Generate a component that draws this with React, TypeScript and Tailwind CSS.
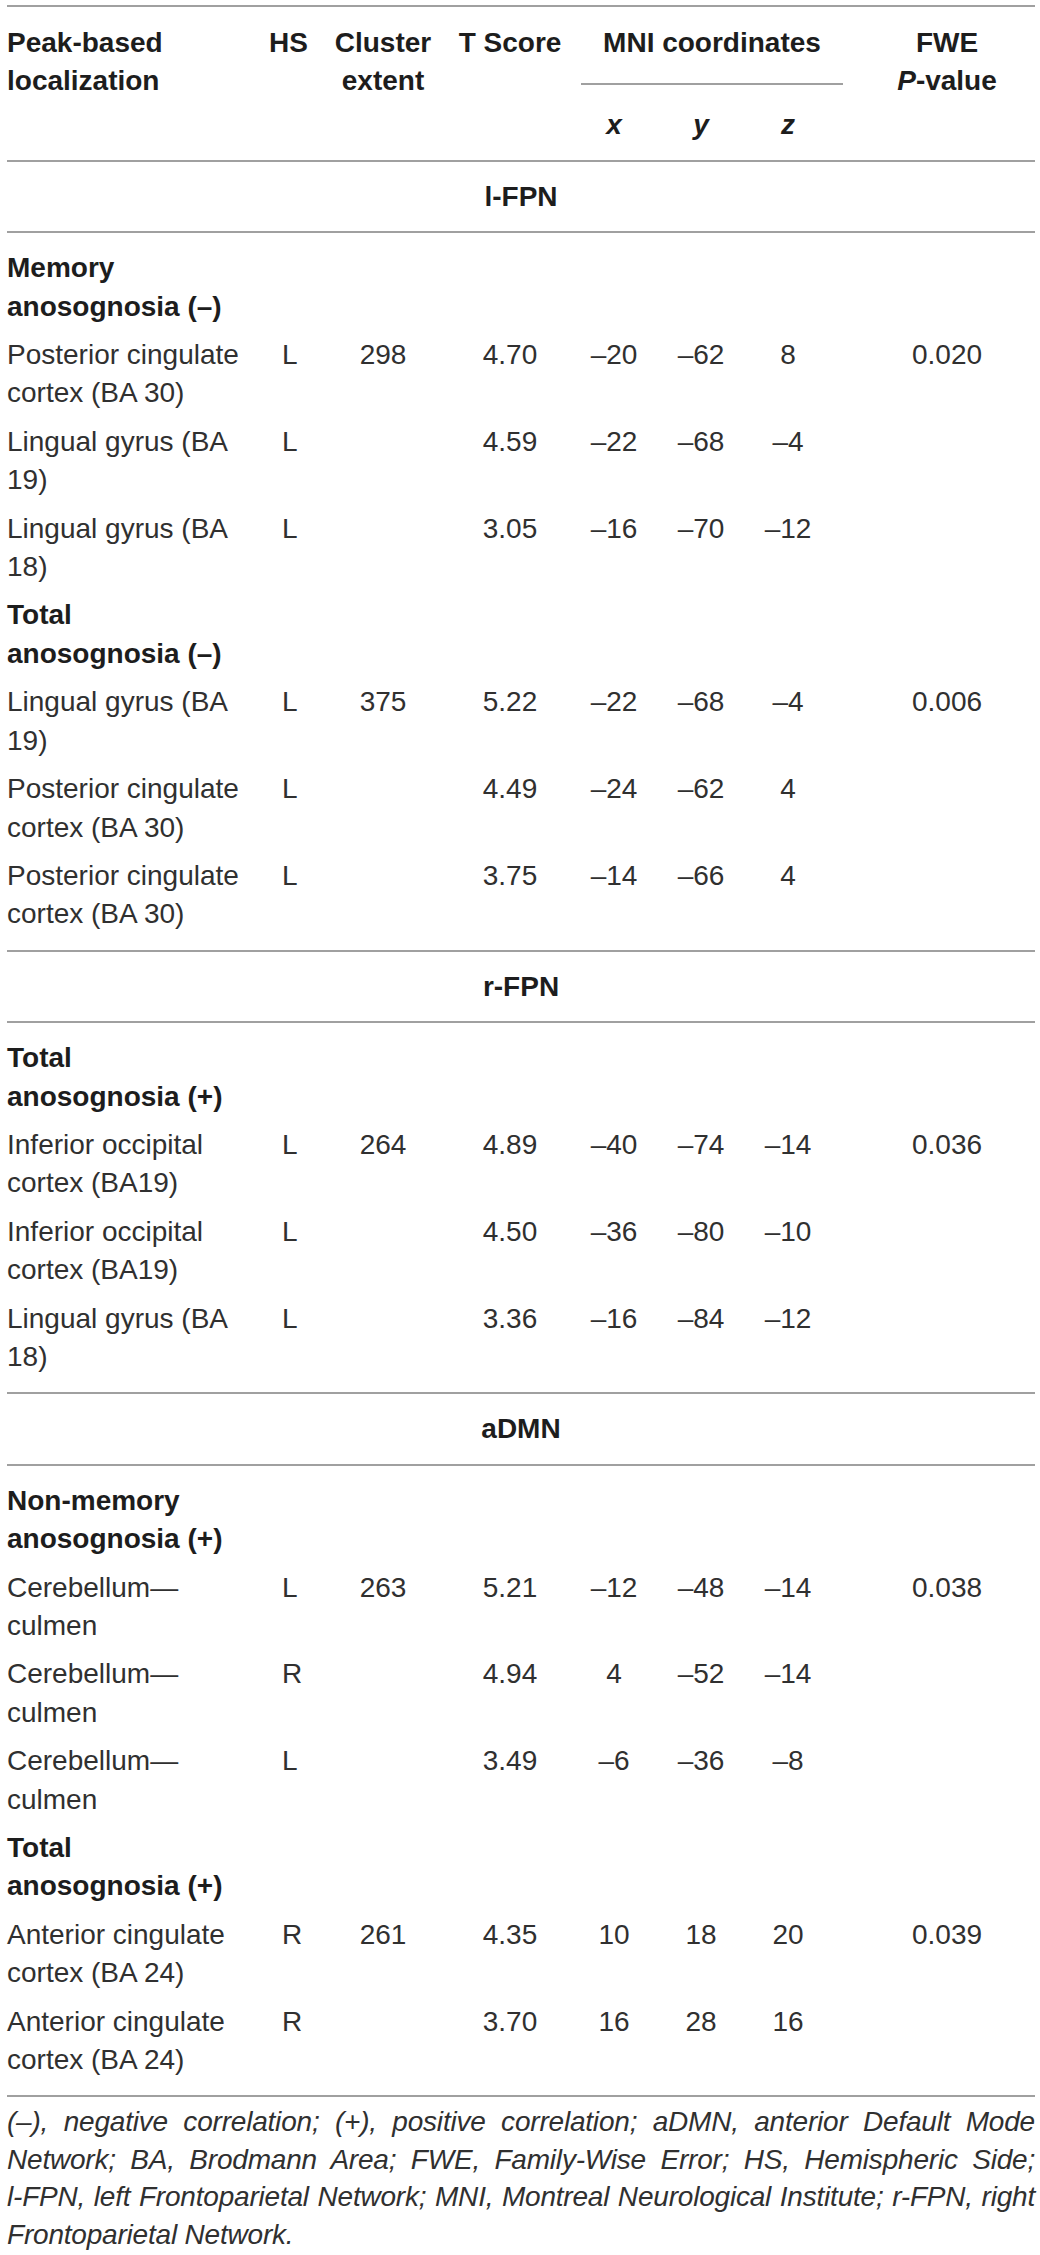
import React from "react";

type Row = {
  label: string;
  bold?: boolean;
  hs?: string;
  ext?: string;
  t?: string;
  x?: string;
  y?: string;
  z?: string;
  p?: string;
};

type Section = { title: string; rows: Row[] };

const cols = "grid grid-cols-[255px_68px_106px_148px_60px_114px_60px_70px_118px_29px]";

const sections: Section[] = [
  {
    title: "l-FPN",
    rows: [
      { label: "Memory anosognosia (–)", bold: true },
      { label: "Posterior cingulate cortex (BA 30)", hs: "L", ext: "298", t: "4.70", x: "–20", y: "–62", z: "8", p: "0.020" },
      { label: "Lingual gyrus (BA 19)", hs: "L", t: "4.59", x: "–22", y: "–68", z: "–4" },
      { label: "Lingual gyrus (BA 18)", hs: "L", t: "3.05", x: "–16", y: "–70", z: "–12" },
      { label: "Total anosognosia (–)", bold: true },
      { label: "Lingual gyrus (BA 19)", hs: "L", ext: "375", t: "5.22", x: "–22", y: "–68", z: "–4", p: "0.006" },
      { label: "Posterior cingulate cortex (BA 30)", hs: "L", t: "4.49", x: "–24", y: "–62", z: "4" },
      { label: "Posterior cingulate cortex (BA 30)", hs: "L", t: "3.75", x: "–14", y: "–66", z: "4" },
    ],
  },
  {
    title: "r-FPN",
    rows: [
      { label: "Total anosognosia (+)", bold: true },
      { label: "Inferior occipital cortex (BA19)", hs: "L", ext: "264", t: "4.89", x: "–40", y: "–74", z: "–14", p: "0.036" },
      { label: "Inferior occipital cortex (BA19)", hs: "L", t: "4.50", x: "–36", y: "–80", z: "–10" },
      { label: "Lingual gyrus (BA 18)", hs: "L", t: "3.36", x: "–16", y: "–84", z: "–12" },
    ],
  },
  {
    title: "aDMN",
    rows: [
      { label: "Non-memory anosognosia (+)", bold: true },
      { label: "Cerebellum—culmen", hs: "L", ext: "263", t: "5.21", x: "–12", y: "–48", z: "–14", p: "0.038" },
      { label: "Cerebellum—culmen", hs: "R", t: "4.94", x: "4", y: "–52", z: "–14" },
      { label: "Cerebellum—culmen", hs: "L", t: "3.49", x: "–6", y: "–36", z: "–8" },
      { label: "Total anosognosia (+)", bold: true },
      { label: "Anterior cingulate cortex (BA 24)", hs: "R", ext: "261", t: "4.35", x: "10", y: "18", z: "20", p: "0.039" },
      { label: "Anterior cingulate cortex (BA 24)", hs: "R", t: "3.70", x: "16", y: "28", z: "16" },
    ],
  },
];

const Rule = () => <div className="h-[2px] bg-[#a0a0a0]" />;

const DataRow = ({ row }: { row: Row }) => (
  <div className={`${cols} py-[5px]`}>
    <div className={`pr-[15px] ${row.bold ? "font-bold text-[#1d1d1d]" : ""}`}>{row.label}</div>
    <div className="pl-[20px]">{row.hs}</div>
    <div className="text-center">{row.ext}</div>
    <div className="text-center">{row.t}</div>
    <div className="text-center">{row.x}</div>
    <div className="text-center">{row.y}</div>
    <div className="text-center">{row.z}</div>
    <div />
    <div className="text-center">{row.p}</div>
    <div />
  </div>
);

export default function App() {
  return (
    <div className="min-h-screen w-[1040px] bg-white pl-[7px] pr-[5px] pt-[5px] font-['Liberation_Sans',Arial,sans-serif] text-[28px] leading-[38.4px] text-[#303030]">
      <Rule />

      {/* header */}
      <div className={`${cols} pt-[17px] pb-[15px] font-bold text-[#1d1d1d]`}>
        <div className="col-start-1 row-start-1 row-span-2">
          Peak-based
          <br />
          localization
        </div>
        <div className="col-start-2 row-start-1 row-span-2 pl-[7px]">HS</div>
        <div className="col-start-3 row-start-1 row-span-2 text-center">
          Cluster
          <br />
          extent
        </div>
        <div className="col-start-4 row-start-1 row-span-2 text-center">T Score</div>
        <div className="col-start-5 col-span-4 row-start-1">
          <div className="ml-[-3px] w-[262px] text-center">MNI coordinates</div>
          <div className="ml-[-3px] mt-[21px] h-[2px] w-[262px] bg-[#a0a0a0]" />
        </div>
        <div className="col-start-9 row-start-1 row-span-2 text-center">
          FWE
          <br />
          <span className="italic">P</span>-value
        </div>
        <div className="col-start-5 row-start-2 pt-[21px] text-center italic">x</div>
        <div className="col-start-6 row-start-2 pt-[21px] text-center italic">y</div>
        <div className="col-start-7 row-start-2 pt-[21px] text-center italic">z</div>
      </div>

      {sections.map((section) => (
        <div key={section.title}>
          <Rule />
          <div className="pt-[16px] pb-[15px] text-center font-bold text-[#1d1d1d]">{section.title}</div>
          <Rule />
          <div className="pt-[11px] pb-[11px]">
            {section.rows.map((row, i) => (
              <DataRow key={i} row={row} />
            ))}
          </div>
        </div>
      ))}

      <Rule />

      {/* footnote */}
      <div className="pt-[6px] text-[28px] italic leading-[37.4px] tracking-[-0.2px] text-[#303030]">
        <div className="text-justify [text-align-last:justify]">
          (–), negative correlation; (+), positive correlation; aDMN, anterior Default Mode
        </div>
        <div className="text-justify [text-align-last:justify]">
          Network; BA, Brodmann Area; FWE, Family-Wise Error; HS, Hemispheric Side;
        </div>
        <div className="text-justify [text-align-last:justify]">
          l-FPN, left Frontoparietal Network; MNI, Montreal Neurological Institute; r-FPN, right
        </div>
        <div>Frontoparietal Network.</div>
      </div>
    </div>
  );
}
